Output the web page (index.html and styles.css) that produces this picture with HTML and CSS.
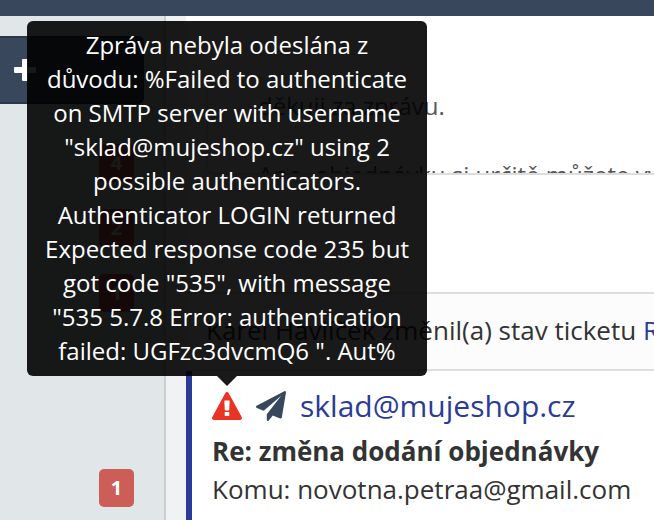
FILE: index.html
```html
<!DOCTYPE html>
<html lang="cs">
<head>
    <meta charset="UTF-8">
    <meta name="viewport" content="width=device-width, initial-scale=1.0">
    <title>Ticket</title>
    <link rel="stylesheet" href="styles.css">
</head>
<body>
    <header class="topbar"></header>
    <div class="layout">
        <aside class="sidebar">
            <button type="button" class="new-ticket" aria-label="Nový ticket">
                <svg width="22" height="22" viewBox="0 0 22 22"><path fill="#fff" d="M9 0h4q1 0 1 1v7h7q1 0 1 1v4q0 1-1 1h-7v7q0 1-1 1H9q-1 0-1-1v-7H1q-1 0-1-1V9q0-1 1-1h7V1q0-1 1-1z"/></svg>
            </button>
            <ul class="folders">
                <li><span class="badge">4</span></li>
                <li><span class="badge">2</span></li>
                <li><span class="badge">1</span></li>
                <li></li>
                <li></li>
                <li><span class="badge">1</span></li>
            </ul>
        </aside>
        <main class="thread">
            <section class="message">
                <div class="message-body">
                    <p>děkuji za zprávu.</p>
                    <p>Ano, objednávku si určitě můžete vy</p>
                </div>
            </section>
            <div class="status">Karel Havlíček změnil(a) stav ticketu <a href="#">R</a></div>
            <article class="card">
                <div class="card-head">
                    <div class="warning">
                        <svg width="30" height="28" viewBox="0 0 30 28">
                            <path fill="#eb3323" d="M13.2 1.2Q13.9 0 15 0t1.8 1.2l12.9 23.7q.6 1.1 0 2.1t-1.8 1H2.1q-1.2 0-1.8-1t0-2.1z"/>
                            <path fill="#fff" d="M12.9 8.6h4.2q.6 0 .6.6l-.5 8.9q0 .4-.6.4h-3.2q-.5 0-.6-.4l-.5-8.9q0-.6.6-.6zM13.2 20h3.6q.5 0 .5.5v3.1q0 .5-.5.5h-3.6q-.5 0-.5-.5v-3.1q0-.5.5-.5z"/>
                        </svg>
                        <div class="tooltip" role="tooltip">Zpráva nebyla odeslána z důvodu: %Failed to authenticate on SMTP server with username "sklad@mujeshop.cz" using 2 possible authenticators. Authenticator LOGIN returned Expected response code 235 but got code "535", with message "535 5.7.8 Error: authentication failed: UGFzc3dvcmQ6 ". Aut%</div>
                    </div>
                    <svg width="30" height="30" viewBox="0 0 30 30"><path fill="#38475c" d="M29.5.2q.6.4.5 1.2l-4.2 25q-.1.6-.6.9-.5.2-1 .1l-7.4-3-4.1 5.1q-.3.5-.8.5-1.1 0-1.1-1.1v-5.7L25.2 4.7 7.7 19.8.8 17q-.7-.3-.8-1 0-.8.6-1.2L28.3.2q.6-.4 1.2 0z"/></svg>
                    <a href="#">sklad@mujeshop.cz</a>
                </div>
                <div class="subject">Re: změna dodání objednávky</div>
                <div>Komu: novotna.petraa@gmail.com</div>
            </article>
        </main>
    </div>
</body>
</html>
```
FILE: styles.css
```css
* {
    box-sizing: border-box;
}
body {
    margin: 0;
    min-height: 100vh;
    display: flex;
    flex-direction: column;
    font-family: "Open Sans", sans-serif;
    font-size: 26px;
    line-height: 38px;
    color: #333;
    background-color: #fff;
}
a {
    color: #2b3c98;
    text-decoration: none;
}
svg {
    display: block;
}
.topbar {
    height: 16px;
    background-color: #38475c;
}
.layout {
    display: flex;
    flex: 1;
}
.sidebar {
    width: 166px;
    flex: none;
    padding: 20px 20px 0 0;
    background-color: #e1e6e8;
    border-right: 2px solid #cccecf;
}
.new-ticket {
    display: flex;
    align-items: center;
    width: 100%;
    height: 68px;
    padding: 0 14px;
    border: 2px solid #2b3749;
    border-left: 0;
    border-radius: 0 6px 6px 0;
    background-color: #38475c;
    cursor: pointer;
}
.folders {
    list-style: none;
    margin: 26px 0 0;
    padding: 0 10px 0 0;
}
.folders li {
    display: flex;
    align-items: center;
    justify-content: flex-end;
    height: 65px;
}
.badge {
    width: 35px;
    border-radius: 5px;
    background-color: #cc5d57;
    color: #fff;
    font-size: 20px;
    font-weight: bold;
    line-height: 38px;
    text-align: center;
}
.thread {
    display: flex;
    flex-direction: column;
    flex: 1;
    min-width: 0;
    padding-left: 20px;
    background-color: #f0f2f4;
}
.message {
    padding: 73px 0 117px 20px;
    background-color: #fff;
}
.message-body {
    height: 86px;
    overflow: hidden;
    padding-left: 50px;
    border: 2px solid #ddd;
    border-width: 0 0 2px 2px;
    border-radius: 0 0 0 8px;
    color: #555;
    font-size: 24px;
    line-height: 34px;
    white-space: nowrap;
}
.message-body p {
    margin: 0 0 35px;
}
.status {
    padding: 17px 0 20px 20px;
    border: 2px solid #ddd;
    border-width: 2px 0;
    background-color: #fcfcfc;
    white-space: nowrap;
    overflow: hidden;
}
.card {
    flex: 1;
    padding: 14px 20px 0;
    border-left: 6px solid #2b3c98;
    background-color: #fff;
}
.card-head {
    display: flex;
    align-items: center;
    gap: 14px;
    margin-bottom: 5px;
    font-size: 30px;
    line-height: 42px;
}
.warning {
    position: relative;
}
.tooltip {
    position: absolute;
    bottom: 100%;
    left: 50%;
    width: 400px;
    margin-bottom: 16px;
    padding: 7px 16px 8px;
    transform: translateX(-50%);
    border-radius: 6px;
    background-color: rgba(0, 0, 0, 0.9);
    color: #fff;
    font-size: 24px;
    line-height: 34px;
    text-align: center;
}
.tooltip::after {
    content: "";
    position: absolute;
    top: 100%;
    left: 50%;
    margin-left: -10px;
    border: 10px solid transparent;
    border-top-color: rgba(0, 0, 0, 0.9);
    border-bottom: 0;
}
.subject {
    font-weight: bold;
}
```
